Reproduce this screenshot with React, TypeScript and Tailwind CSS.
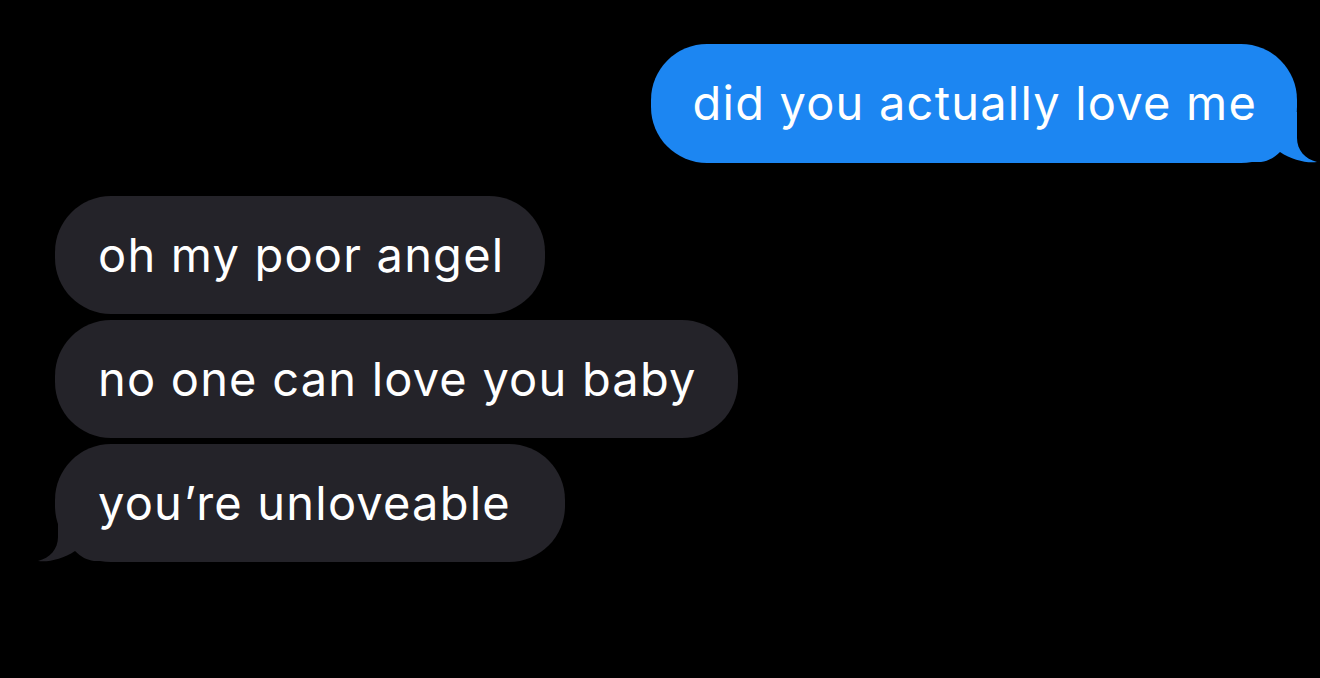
import React from 'react';

const BLUE = '#1c86f2';
const GRAY = '#242329';

const Tail = ({ color, flip }: { color: string; flip?: boolean }) => (
  <svg
    width="76"
    height="51"
    viewBox="0 0 76 51"
    className={flip ? 'absolute bottom-0 left-[-17px] -scale-x-100' : 'absolute bottom-0 right-[-20px]'}
  >
    <path
      d="M56 0 L56 26 C56 38 64 47 76 50 C66 51.5 51 48 39 40 C33 46 27 49 20 50 L0 50 L0 0 Z"
      fill={color}
    />
  </svg>
);

const Bubble = ({ text, tail }: { text: string; tail?: boolean }) => (
  <div
    className={
      tail
        ? 'relative flex h-[118px] items-center rounded-[56px] bg-[#242329] pl-[43px] pr-[54px] whitespace-nowrap text-white'
        : 'relative flex h-[118px] items-center rounded-[56px] bg-[#242329] pl-[43px] pr-[41px] whitespace-nowrap text-white'
    }
  >
    <span className="relative z-10">{text}</span>
    {tail && <Tail color={GRAY} flip />}
  </div>
);

export default function App() {
  return (
    <div
      className="h-[678px] w-[1320px] overflow-hidden bg-black pt-[44px] text-[47px] tracking-[1.2px]"
      style={{ fontFamily: 'Inter, "Liberation Sans", sans-serif' }}
    >
      <div className="flex justify-end pr-[23px]">
        <div className="relative flex h-[119px] items-center rounded-[56px] bg-[#1c86f2] pl-[42px] pr-[40px] whitespace-nowrap text-white">
          <span className="relative z-10">did you actually love me</span>
          <Tail color={BLUE} />
        </div>
      </div>

      <div className="mt-[33px] flex flex-col items-start gap-[6px] pl-[55px]">
        <Bubble text="oh my poor angel" />
        <Bubble text="no one can love you baby" />
        <Bubble text="you’re unloveable" tail />
      </div>
    </div>
  );
}
